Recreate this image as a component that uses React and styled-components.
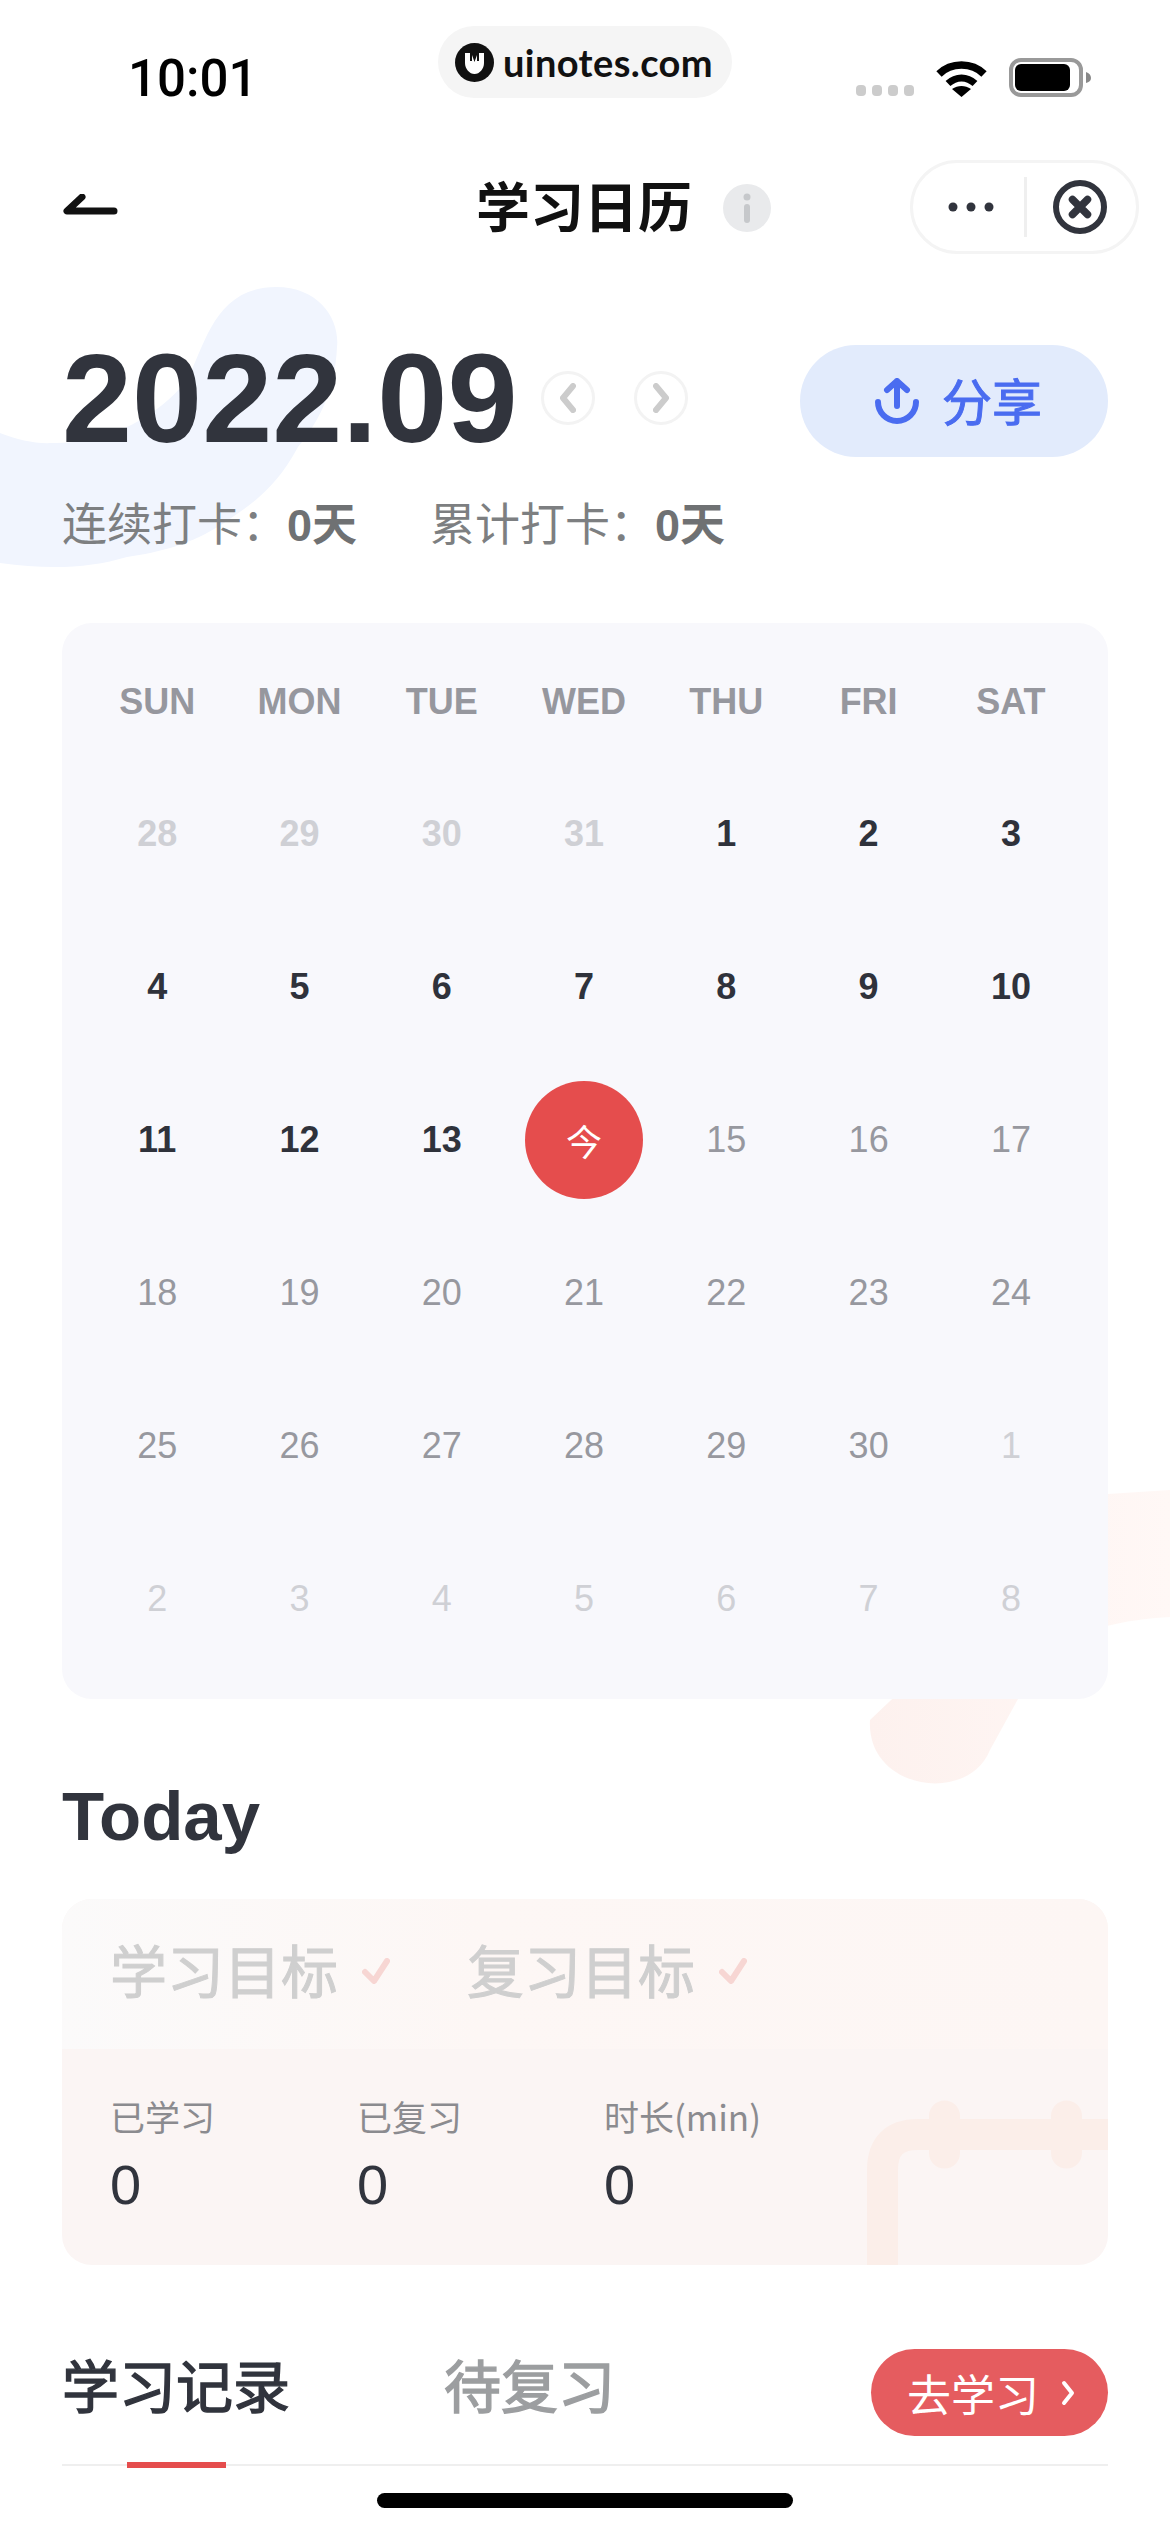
import React from "react";
import styled, { createGlobalStyle } from "styled-components";

const GlobalStyle = createGlobalStyle`
  html, body {
    margin: 0;
    padding: 0;
    background: #ffffff;
  }
  * {
    box-sizing: border-box;
  }
`;

const sans = `"Liberation Sans", "Noto Sans CJK SC", sans-serif`;
const cjk = `"Noto Sans CJK SC", "Liberation Sans", sans-serif`;

const Page = styled.div`
  position: relative;
  width: 1170px;
  height: 2532px;
  overflow: hidden;
  background: #ffffff;
  font-family: ${sans};
`;

const Backdrop = styled.svg`
  position: absolute;
  left: 0;
  top: 0;
  width: 1170px;
  height: 2532px;
`;

const Content = styled.div`
  position: relative;
  display: flex;
  flex-direction: column;
`;

const StatusBar = styled.div`
  display: grid;
  grid-template-columns: 438px 294px 1fr;
  height: 160px;
  padding-top: 26px;
`;

const Time = styled.div`
  padding: 25px 0 0 128px;
  font-family: Roboto, sans-serif;
  font-size: 51px;
  font-weight: 500;
  line-height: 56px;
  color: #000000;
`;

const UrlPill = styled.div`
  display: flex;
  align-items: center;
  gap: 9px;
  height: 72px;
  padding-left: 17px;
  border-radius: 36px;
  background: #f5f5f5;
`;

const UrlText = styled.span`
  font-family: Lato, sans-serif;
  font-size: 38px;
  font-weight: 700;
  color: #111111;
  letter-spacing: 0.4px;
`;

const StatusIcons = styled.div`
  display: flex;
  align-items: flex-end;
  height: 71px;
  padding-left: 124px;
`;

const SignalDots = styled.div`
  display: flex;
  gap: 6px;
  margin-right: 22px;
  padding-bottom: 1px;
`;

const SignalDot = styled.span`
  width: 10px;
  height: 11px;
  border-radius: 4px;
  background: #cccccc;
`;

const WifiIcon = styled.svg`
  width: 51px;
  height: 37px;
  margin-right: 22px;
`;

const BatteryIcon = styled.svg`
  width: 82px;
  height: 39px;
`;

const NavBar = styled.div`
  display: grid;
  grid-template-columns: 414px 1fr auto;
  align-items: center;
  height: 94px;
  padding: 0 31px 0 62px;
`;

const BackIcon = styled.svg`
  width: 56px;
  height: 24px;
  margin-bottom: 5px;
`;

const TitleGroup = styled.div`
  display: flex;
  align-items: center;
  gap: 31px;
`;

const PageTitle = styled.h1`
  margin: 0 0 6px;
  font-family: ${cjk};
  font-size: 54px;
  font-weight: 700;
  line-height: 60px;
  color: #111111;
`;

const InfoBadge = styled.span`
  display: flex;
  align-items: center;
  justify-content: center;
  width: 48px;
  height: 48px;
  border-radius: 50%;
  background: #e9eaec;
`;

const Capsule = styled.div`
  display: flex;
  align-items: center;
  width: 229px;
  height: 94px;
  margin-bottom: 2px;
  padding-left: 35px;
  border: 3px solid #f4f4f4;
  border-radius: 47px;
`;

const MoreIcon = styled.svg`
  width: 46px;
  height: 10px;
`;

const CapsuleDivider = styled.span`
  width: 3px;
  height: 60px;
  margin: 0 26px 0 30px;
  background: #efefef;
`;

const CloseIcon = styled.svg`
  width: 54px;
  height: 54px;
`;

const Header = styled.div`
  display: flex;
  flex-direction: column;
  padding: 91px 62px 0;
`;

const YearRow = styled.div`
  display: flex;
  align-items: center;
  height: 112px;
`;

const Year = styled.div`
  margin-bottom: 4px;
  font-size: 126px;
  font-weight: 700;
  line-height: 112px;
  color: #31343d;
`;

const MonthButton = styled.span`
  display: flex;
  align-items: center;
  justify-content: center;
  width: 54px;
  height: 54px;
  margin: 0 0 6px ${(p) => p.$gap}px;
  border: 3px solid #f3f3f3;
  border-radius: 50%;
`;

const ShareButton = styled.div`
  display: flex;
  align-items: center;
  justify-content: center;
  gap: 23px;
  width: 308px;
  height: 112px;
  margin-left: auto;
  padding-left: 9px;
  border-radius: 56px;
  background: #e2ebfc;
`;

const ShareLabel = styled.span`
  margin-bottom: 5px;
  font-family: ${cjk};
  font-size: 50px;
  font-weight: 400;
  -webkit-text-stroke: 1px #4a6cf0;
  color: #4a6cf0;
`;

const StatsRow = styled.div`
  display: flex;
  gap: 73px;
  height: 56px;
  margin-top: 37px;
  font-family: ${cjk};
  font-size: 45px;
  line-height: 56px;
  color: #7d7f81;
`;

const StatValue = styled.b`
  font-family: ${sans};
  font-weight: 700;
  color: #6f7173;
`;

const Calendar = styled.div`
  height: 1076px;
  margin: 73px 62px 0;
  padding: 56px 24px 0 24px;
  border-radius: 30px;
  background: #f8f8fc;
`;

const WeekRow = styled.div`
  display: grid;
  grid-template-columns: repeat(7, 142.3px);
  height: 78px;
`;

const WeekDay = styled.div`
  height: 46px;
  font-size: 36px;
  font-weight: 700;
  line-height: 46px;
  text-align: center;
  color: #96979e;
`;

const DayGrid = styled.div`
  display: grid;
  grid-template-columns: repeat(7, 142.3px);
  grid-auto-rows: 153px;
`;

const DayCell = styled.div`
  display: flex;
  align-items: center;
  justify-content: center;
  font-size: 36px;
  font-weight: ${(p) => (p.$bold ? 700 : 400)};
  color: ${(p) => p.$color};
`;

const TodayMark = styled.span`
  display: flex;
  align-items: center;
  justify-content: center;
  width: 118px;
  height: 118px;
  border-radius: 50%;
  background: #e54d4d;
  font-family: ${cjk};
  font-size: 36px;
  color: #ffffff;
`;

const SectionTitle = styled.h2`
  margin: 78px 0 0 62px;
  font-size: 69px;
  font-weight: 700;
  line-height: 80px;
  color: #31343d;
`;

const TodayCard = styled.div`
  position: relative;
  height: 366px;
  margin: 42px 62px 0;
  border-radius: 30px;
  overflow: hidden;
  background: #fbf5f4;
`;

const CardWatermark = styled.svg`
  position: absolute;
  right: 0;
  bottom: 0;
  width: 241px;
  height: 165px;
`;

const GoalRow = styled.div`
  display: flex;
  gap: 77px;
  height: 150px;
  padding: 33px 48px 0;
  background: linear-gradient(90deg, #fbfafa, #fdf7f5 40%, #fdf6f4);
`;

const Goal = styled.div`
  display: flex;
  align-items: center;
  gap: 24px;
  height: 72px;
  font-family: ${cjk};
  font-size: 57px;
  font-weight: 400;
  -webkit-text-stroke: 1px #cfcfcf;
  color: #cfcfcf;
`;

const CheckIcon = styled.svg`
  width: 28px;
  height: 26px;
  margin-top: 6px;
`;

const MetricRow = styled.div`
  position: relative;
  display: grid;
  grid-template-columns: repeat(3, 247px);
  padding: 43px 48px 0;
`;

const MetricLabel = styled.div`
  font-family: ${cjk};
  font-size: 35px;
  line-height: 48px;
  color: #8b8b8f;
`;

const MetricValue = styled.div`
  margin-top: 13px;
  font-size: 56px;
  line-height: 64px;
  color: #31343d;
`;

const TabRow = styled.div`
  display: flex;
  align-items: flex-start;
  height: 117px;
  margin: 84px 62px 0;
  border-bottom: 2px solid #efefef;
`;

const Tab = styled.div`
  position: relative;
  width: ${(p) => p.$width}px;
  margin-top: 4px;
  font-family: ${cjk};
  font-size: 57px;
  font-weight: 400;
  line-height: 60px;
  -webkit-text-stroke: 1.4px ${(p) => (p.$active ? "#31343d" : "#9c9ea0")};
  color: ${(p) => (p.$active ? "#31343d" : "#9c9ea0")};
`;

const TabUnderline = styled.span`
  position: absolute;
  left: 65px;
  top: 109px;
  width: 99px;
  height: 6px;
  background: #e54d4d;
`;

const GoButton = styled.div`
  display: flex;
  align-items: center;
  gap: 22px;
  width: 237px;
  height: 87px;
  margin-left: auto;
  padding-left: 36px;
  border-radius: 44px;
  background: #e55c5f;
  font-family: ${cjk};
  font-size: 44px;
  color: #ffffff;
`;

const HomeBar = styled.div`
  width: 416px;
  height: 15px;
  margin: 27px auto 0;
  border-radius: 8px;
  background: #000000;
`;

const weekDays = ["SUN", "MON", "TUE", "WED", "THU", "FRI", "SAT"];

const STRONG = "#2f323b";
const MUTED = "#97989f";
const FAINT = "#cfd0d5";

const days = [
  ...[28, 29, 30, 31].map((d) => ({ d, color: FAINT, bold: true })),
  ...[1, 2, 3, 4, 5, 6, 7, 8, 9, 10, 11, 12, 13].map((d) => ({ d, color: STRONG, bold: true })),
  { d: "今", today: true },
  ...[15, 16, 17, 18, 19, 20, 21, 22, 23, 24, 25, 26, 27, 28, 29, 30].map((d) => ({ d, color: MUTED })),
  ...[1, 2, 3, 4, 5, 6, 7, 8].map((d) => ({ d, color: FAINT })),
];

function Check() {
  return (
    <CheckIcon viewBox="0 0 28 26">
      <path d="M3 14 L12 23 L25 3" fill="none" stroke="#f7d6d3" strokeWidth="6" strokeLinecap="round" strokeLinejoin="round" />
    </CheckIcon>
  );
}

export default function App() {
  return (
    <Page>
      <GlobalStyle />
      <Backdrop viewBox="0 0 1170 2532">
        <defs>
          <linearGradient id="redFade" x1="0" x2="1" y1="0" y2="0">
            <stop offset="0" stopColor="#fdf1ee" />
            <stop offset="1" stopColor="#fff8f6" />
          </linearGradient>
        </defs>
        <path
          d="M0 433 C18 440 36 444 52 443 C110 444 160 415 187 380 C205 345 215 287 276 287 C320 287 340 320 337 347 C335 390 320 420 298 447 C275 490 250 505 224 523 C190 545 160 552 127 557 C90 568 50 570 0 563 Z"
          fill="#f1f5fe"
        />
        <path
          d="M1170 1490 L1108 1494 L870 1720 C866 1790 968 1805 990 1750 L1018 1699 C1050 1640 1090 1622 1170 1617 Z"
          fill="url(#redFade)"
        />
      </Backdrop>
      <Content>
        <StatusBar>
          <Time>10:01</Time>
          <UrlPill>
            <svg width="39" height="39" viewBox="0 0 39 39">
              <circle cx="19.5" cy="19.5" r="19.5" fill="#111111" />
              <path
                d="M10 10 H15 V18 H17 V12 L19.5 19 L22 12 V18 H24 V10 H29 V20 C29 26 24.5 31 19.5 31 C14.5 31 10 26 10 20 Z"
                fill="#ffffff"
              />
            </svg>
            <UrlText>uinotes.com</UrlText>
          </UrlPill>
          <StatusIcons>
            <SignalDots>
              <SignalDot />
              <SignalDot />
              <SignalDot />
              <SignalDot />
            </SignalDots>
            <WifiIcon viewBox="0 0 51 37">
              <path d="M3 14 C15 2 36 2 48 14" fill="none" stroke="#000000" strokeWidth="7.5" />
              <path d="M12 23.5 C20 16 31 16 39 23.5" fill="none" stroke="#000000" strokeWidth="7" />
              <path d="M16 29 C22 25 29 25 35 29 L25.5 37 Z" fill="#000000" />
            </WifiIcon>
            <BatteryIcon viewBox="0 0 82 39">
              <rect x="2" y="2" width="70" height="35" rx="10" fill="none" stroke="#999999" strokeWidth="4" />
              <rect x="6" y="6" width="55" height="27" rx="6" fill="#000000" />
              <path d="M77 14 C80 15 82 17 82 20 C82 23 80 24 77 25 Z" fill="#888888" />
            </BatteryIcon>
          </StatusIcons>
        </StatusBar>

        <NavBar>
          <BackIcon viewBox="0 0 56 24">
            <path d="M20 3 L5 17 H52" fill="none" stroke="#111111" strokeWidth="7" strokeLinecap="round" strokeLinejoin="round" />
          </BackIcon>
          <TitleGroup>
            <PageTitle>学习日历</PageTitle>
            <InfoBadge>
              <svg width="10" height="30" viewBox="0 0 10 30">
                <circle cx="5" cy="4" r="3.5" fill="#c6c8cb" />
                <rect x="2" y="11" width="6" height="19" rx="3" fill="#c6c8cb" />
              </svg>
            </InfoBadge>
          </TitleGroup>
          <Capsule>
            <MoreIcon viewBox="0 0 46 10">
              <circle cx="5" cy="5" r="4.5" fill="#31343d" />
              <circle cx="23" cy="5" r="4.5" fill="#31343d" />
              <circle cx="41" cy="5" r="4.5" fill="#31343d" />
            </MoreIcon>
            <CapsuleDivider />
            <CloseIcon viewBox="0 0 54 54">
              <circle cx="27" cy="27" r="24" fill="none" stroke="#31343d" strokeWidth="6" />
              <path d="M19.5 19.5 L34.5 34.5 M34.5 19.5 L19.5 34.5" fill="none" stroke="#31343d" strokeWidth="7.5" strokeLinecap="round" />
            </CloseIcon>
          </Capsule>
        </NavBar>

        <Header>
          <YearRow>
            <Year>2022.09</Year>
            <MonthButton $gap={24}>
              <svg width="16" height="30" viewBox="0 0 16 30">
                <path d="M13 3 L3 15 L13 27" fill="none" stroke="#cccccc" strokeWidth="6" strokeLinecap="round" strokeLinejoin="round" />
              </svg>
            </MonthButton>
            <MonthButton $gap={39}>
              <svg width="16" height="30" viewBox="0 0 16 30">
                <path d="M3 3 L13 15 L3 27" fill="none" stroke="#cccccc" strokeWidth="6" strokeLinecap="round" strokeLinejoin="round" />
              </svg>
            </MonthButton>
            <ShareButton>
              <svg width="44" height="46" viewBox="0 0 44 46">
                <path d="M22 3 V28 M12 12 L22 3 L32 12" fill="none" stroke="#4a6cf0" strokeWidth="6" strokeLinecap="round" strokeLinejoin="round" />
                <path d="M3 24 A19 19 0 0 0 41 24" fill="none" stroke="#4a6cf0" strokeWidth="6" strokeLinecap="round" />
              </svg>
              <ShareLabel>分享</ShareLabel>
            </ShareButton>
          </YearRow>
          <StatsRow>
            <span>
              连续打卡：<StatValue>0天</StatValue>
            </span>
            <span>
              累计打卡：<StatValue>0天</StatValue>
            </span>
          </StatsRow>
        </Header>

        <Calendar>
          <WeekRow>
            {weekDays.map((w) => (
              <WeekDay key={w}>{w}</WeekDay>
            ))}
          </WeekRow>
          <DayGrid>
            {days.map((item, i) => (
              <DayCell key={i} $bold={item.bold} $color={item.color}>
                {item.today ? <TodayMark>{item.d}</TodayMark> : item.d}
              </DayCell>
            ))}
          </DayGrid>
        </Calendar>

        <SectionTitle>Today</SectionTitle>
        <TodayCard>
          <CardWatermark viewBox="867 2100 241 165">
            <defs>
              <linearGradient id="barFade" x1="0" x2="1" y1="0" y2="0">
                <stop offset="0" stopColor="#fbeee9" />
                <stop offset="1" stopColor="#fbf4f2" />
              </linearGradient>
            </defs>
            <g fill="none" stroke="#fbeee9" strokeWidth="31">
              <path d="M882.5 2270 V2170 Q882.5 2134.5 918 2134.5 H1110" />
              <path d="M898 2212 H1100" stroke="url(#barFade)" />
              <path d="M944.5 2116 V2153 M1066.5 2116 V2153" strokeLinecap="round" />
            </g>
          </CardWatermark>
          <GoalRow>
            <Goal>
              学习目标
              <Check />
            </Goal>
            <Goal>
              复习目标
              <Check />
            </Goal>
          </GoalRow>
          <MetricRow>
            <div>
              <MetricLabel>已学习</MetricLabel>
              <MetricValue>0</MetricValue>
            </div>
            <div>
              <MetricLabel>已复习</MetricLabel>
              <MetricValue>0</MetricValue>
            </div>
            <div>
              <MetricLabel>时长(min)</MetricLabel>
              <MetricValue>0</MetricValue>
            </div>
          </MetricRow>
        </TodayCard>

        <TabRow>
          <Tab $active $width={382}>
            学习记录
            <TabUnderline />
          </Tab>
          <Tab $width={200}>待复习</Tab>
          <GoButton>
            去学习
            <svg width="14" height="26" viewBox="0 0 14 26">
              <path d="M3 3 L11 13 L3 23" fill="none" stroke="#ffffff" strokeWidth="4" strokeLinecap="round" strokeLinejoin="round" />
            </svg>
          </GoButton>
        </TabRow>
        <HomeBar />
      </Content>
    </Page>
  );
}
